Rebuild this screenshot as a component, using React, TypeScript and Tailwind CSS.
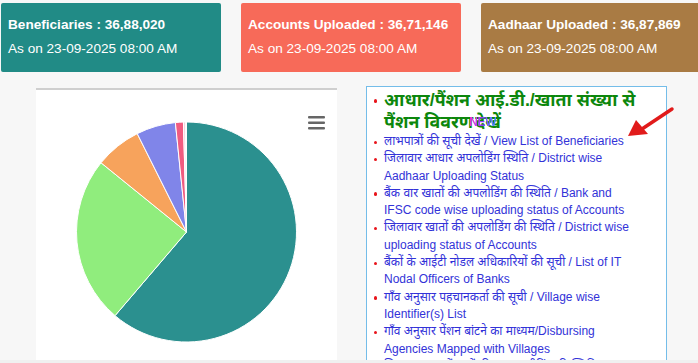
const cards = [
  { title: "Beneficiaries : 36,88,020", bg: "bg-[#218b86]" },
  { title: "Accounts Uploaded : 36,71,146", bg: "bg-[#f76a59]" },
  { title: "Aadhaar Uploaded : 36,87,869", bg: "bg-[#a97b44]" },
];

const slices = [
  { from: 0, to: 220.5, color: "#2b908f" },
  { from: 220.5, to: 309, color: "#90ed7d" },
  { from: 309, to: 333.4, color: "#f7a35c" },
  { from: 333.4, to: 354.2, color: "#8085e9" },
  { from: 354.2, to: 358.4, color: "#f15c80" },
  { from: 358.4, to: 359.4, color: "#f6c9d4" },
];

const links = [
  ["लाभपात्रों की सूची देखें / View List of Beneficiaries"],
  ["जिलावार आधार अपलोडिंग स्थिति / District wise", "Aadhaar Uploading Status"],
  ["बैंक वार खातों की अपलोडिंग की स्थिति / Bank and", "IFSC code wise uploading status of Accounts"],
  ["जिलावार खातों की अपलोडिंग की स्थिति / District wise", "uploading status of Accounts"],
  ["बैंकों के आईटी नोडल अधिकारियों की सूची / List of IT", "Nodal Officers of Banks"],
  ["गाँव अनुसार पहचानकर्ता की सूची / Village wise", "Identifier(s) List"],
  ["गाँव अनुसार पेंशन बांटने का माध्यम/Disbursing", "Agencies Mapped with Villages"],
  ["जिला स्तर पर पेंशनरों की आधार सीडिंग की स्थिति / District", "wise Aadhaar Seeding Status"],
];

function arcPath(cx: number, cy: number, r: number, a0: number, a1: number) {
  const pt = (a: number) => {
    const t = ((a - 90) * Math.PI) / 180;
    return [cx + r * Math.cos(t), cy + r * Math.sin(t)];
  };
  const [x0, y0] = pt(a0);
  const [x1, y1] = pt(a1);
  const large = a1 - a0 > 180 ? 1 : 0;
  return `M${cx},${cy} L${x0},${y0} A${r},${r} 0 ${large} 1 ${x1},${y1} Z`;
}

function PieChart() {
  return (
    <svg width="301" height="272" viewBox="0 0 301 272">
      {slices.map((s) => (
        <path
          key={s.from}
          d={arcPath(150.5, 142, 110, s.from, s.to)}
          fill={s.color}
          stroke="#ffffff"
          strokeWidth="1"
        />
      ))}
      {/* context menu button */}
      <g fill="#666666">
        <rect x="272" y="26" width="17" height="2.5" rx="1" />
        <rect x="272" y="31.5" width="17" height="2.5" rx="1" />
        <rect x="272" y="37" width="17" height="2.5" rx="1" />
      </g>
    </svg>
  );
}

export default function App() {
  return (
    <div className="relative h-[363px] w-[698px] overflow-hidden bg-[#f0f0f0] font-['Liberation_Sans','Noto_Sans',sans-serif]">
      <div className="bg-[#f7f7f7]">
        {/* Summary cards */}
        <div className="flex gap-5 pl-px pt-[3px]">
          {cards.map((c) => (
            <div
              key={c.title}
              className={`${c.bg} h-[69px] w-[220px] shrink-0 rounded-[2px] px-[7px] pt-[14px] text-white`}
            >
              <div className="text-[13.6px] font-bold leading-4">{c.title}</div>
              <div className="mt-2 text-[13.6px] leading-4">As on 23-09-2025 08:00 AM</div>
            </div>
          ))}
        </div>

        {/* Chart + links */}
        <div className="mt-[14px] flex h-[274px] gap-[29px] overflow-hidden pl-[36px]">
          <div className="mt-[2px] h-[290px] w-[301px] shrink-0 border-t-2 border-[#cfcfcf] bg-white">
            <PieChart />
          </div>

          <div className="h-[300px] w-[301px] shrink-0 border border-[#74bde9] bg-white pl-[6.5px] pt-[2px]">
            <ul>
              <li className="flex gap-[7px]">
                <span className="mt-[10px] h-[3.5px] w-[3.5px] shrink-0 rounded-full bg-[#e8141b]" />
                <span className="text-[17.8px] font-bold leading-[22px] text-[#0c870c]">
                  आधार/पैंशन आई.डी./खाता संख्या से
                  <br />
                  पैंशन विवरण
                  <span className="relative ml-[2px]">
                    देखें
                    <span className="absolute left-[-6px] top-[4px] bg-gradient-to-r from-[#ff1fd2] via-[#8a3cff] to-[#2f8bff] bg-clip-text text-[12px] font-black leading-none tracking-tight text-transparent">
                      NEW
                    </span>
                  </span>
                </span>
              </li>
              {links.map((l) => (
                <li key={l[0]} className="flex gap-[7px]">
                  <span className="mt-[7.5px] h-[3.5px] w-[3.5px] shrink-0 rounded-full bg-[#e8141b]" />
                  <span className="text-[12px] leading-[17.3px] text-[#3232d8]">
                    {l[0]}
                    {l[1] && (
                      <>
                        <br />
                        {l[1]}
                      </>
                    )}
                  </span>
                </li>
              ))}
            </ul>
          </div>
        </div>
      </div>

      {/* Red pointer arrow */}
      <svg className="absolute left-[620px] top-[104px]" width="60" height="40" viewBox="0 0 60 40">
        <line x1="52" y1="5" x2="22" y2="25" stroke="#e11b1b" strokeWidth="3.5" strokeLinecap="round" />
        <polygon points="8,32 16,16 28,30" fill="#e11b1b" />
      </svg>
    </div>
  );
}
